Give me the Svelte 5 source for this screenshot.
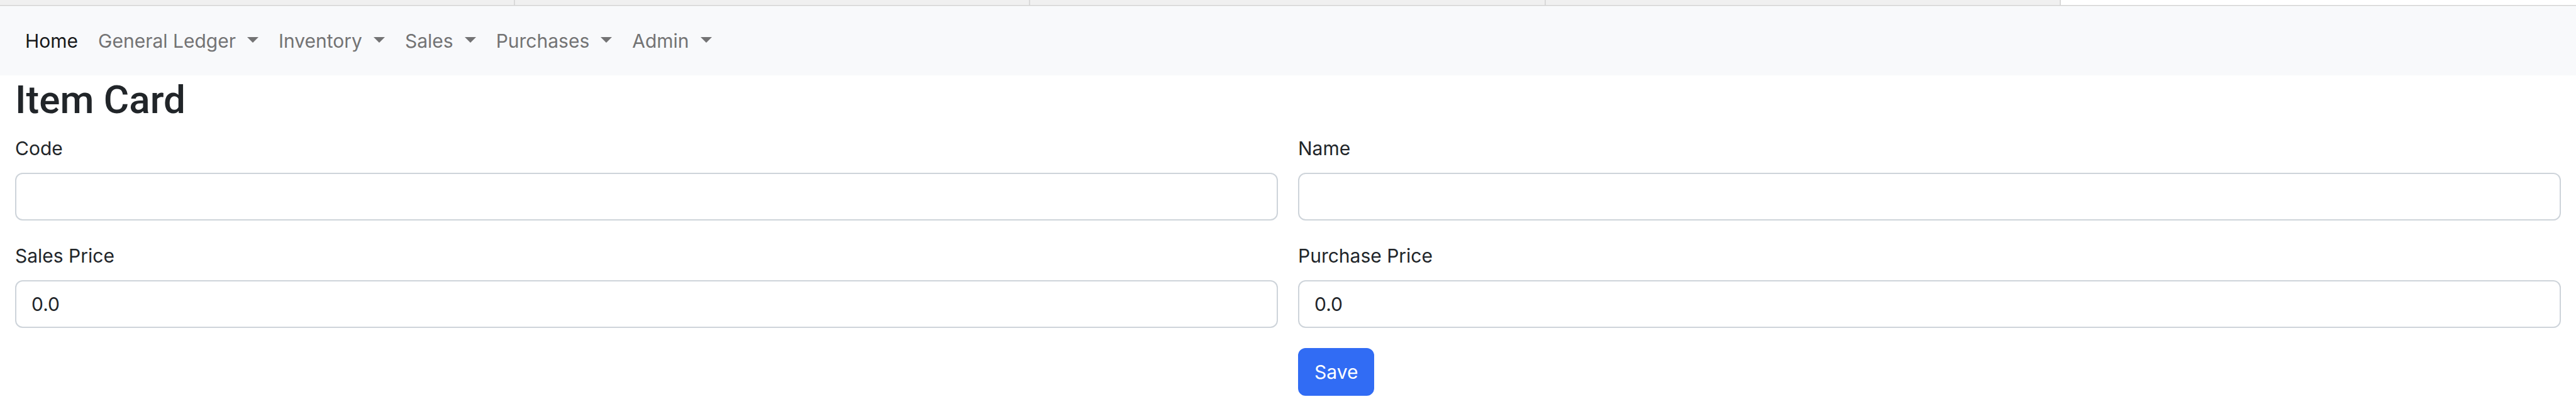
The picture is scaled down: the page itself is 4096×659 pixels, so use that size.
<script>
  const menus = ['General Ledger', 'Inventory', 'Sales', 'Purchases', 'Admin'];
  const tabs = [1, 2, 3, 4, 5];
  let item = $state({ code: '', name: '', salesPrice: '0.0', purchasePrice: '0.0' });
</script>

<div class="tabs" aria-hidden="true">
  {#each tabs as tab}
    <span class="tab" class:current={tab === 5}></span>
  {/each}
</div>

<nav class="navbar">
  <a class="link active" href="#home">Home</a>
  {#each menus as menu}
    <button class="link" type="button">
      {menu}<svg class="caret" viewBox="0 0 18 9" aria-hidden="true"><path d="M0 0h18L9 9z" /></svg>
    </button>
  {/each}
</nav>

<main>
  <h2>Item Card</h2>
  <form onsubmit={(event) => event.preventDefault()}>
    <div class="field">
      <label for="code">Code</label>
      <input id="code" type="text" bind:value={item.code} />
    </div>
    <div class="field">
      <label for="name">Name</label>
      <input id="name" type="text" bind:value={item.name} />
    </div>
    <div class="field">
      <label for="sales-price">Sales Price</label>
      <input id="sales-price" type="text" bind:value={item.salesPrice} />
    </div>
    <div class="field">
      <label for="purchase-price">Purchase Price</label>
      <input id="purchase-price" type="text" bind:value={item.purchasePrice} />
    </div>
    <button class="save" type="submit">Save</button>
  </form>
</main>

<style>
  :global(body) {
    background: #fff;
    color: #212529;
    font-family: Inter, 'Liberation Sans', sans-serif;
    font-size: 30px;
    line-height: 48px;
  }
  .tabs {
    display: grid;
    grid-template-columns: repeat(5, 1fr);
    height: 8px;
    border-bottom: 1px solid #d0d0d0;
  }
  .tab {
    box-sizing: border-box;
    background: #f0f0f0;
    border-right: 2px solid #dadada;
  }
  .tab.current {
    background: #fff;
    border-right: 0;
  }
  .navbar {
    display: flex;
    flex-wrap: wrap;
    padding: 15px 24px;
    border-top: 1px solid #ebebeb;
    background: #f8f9fb;
  }
  .link {
    display: flex;
    align-items: center;
    padding: 16px;
    border: 0;
    background: none;
    color: #737374;
    font: inherit;
    text-decoration: none;
  }
  .link.active {
    color: #17181a;
  }
  .caret {
    width: 18px;
    height: 9px;
    margin-left: 18px;
    margin-bottom: 4px;
    fill: currentColor;
  }
  main {
    padding: 0 24px 28px;
  }
  h2 {
    margin: 0 0 15px;
    font-family: Roboto, 'Liberation Sans', sans-serif;
    font-size: 62px;
    font-weight: 500;
    line-height: 77px;
  }
  form {
    display: grid;
    grid-template-columns: 1fr 1fr;
    gap: 32px;
  }
  .field {
    display: flex;
    flex-direction: column;
    gap: 15px;
  }
  input {
    box-sizing: border-box;
    width: 100%;
    height: 76px;
    padding: 12px 24px;
    border: 2px solid #ced4da;
    border-radius: 12px;
    background: #fff;
    color: inherit;
    font: inherit;
  }
  .save {
    grid-column: 2;
    justify-self: start;
    padding: 12px 24px;
    border: 2px solid #316cf4;
    border-radius: 12px;
    background: #316cf4;
    color: #fff;
    font: inherit;
  }
</style>
